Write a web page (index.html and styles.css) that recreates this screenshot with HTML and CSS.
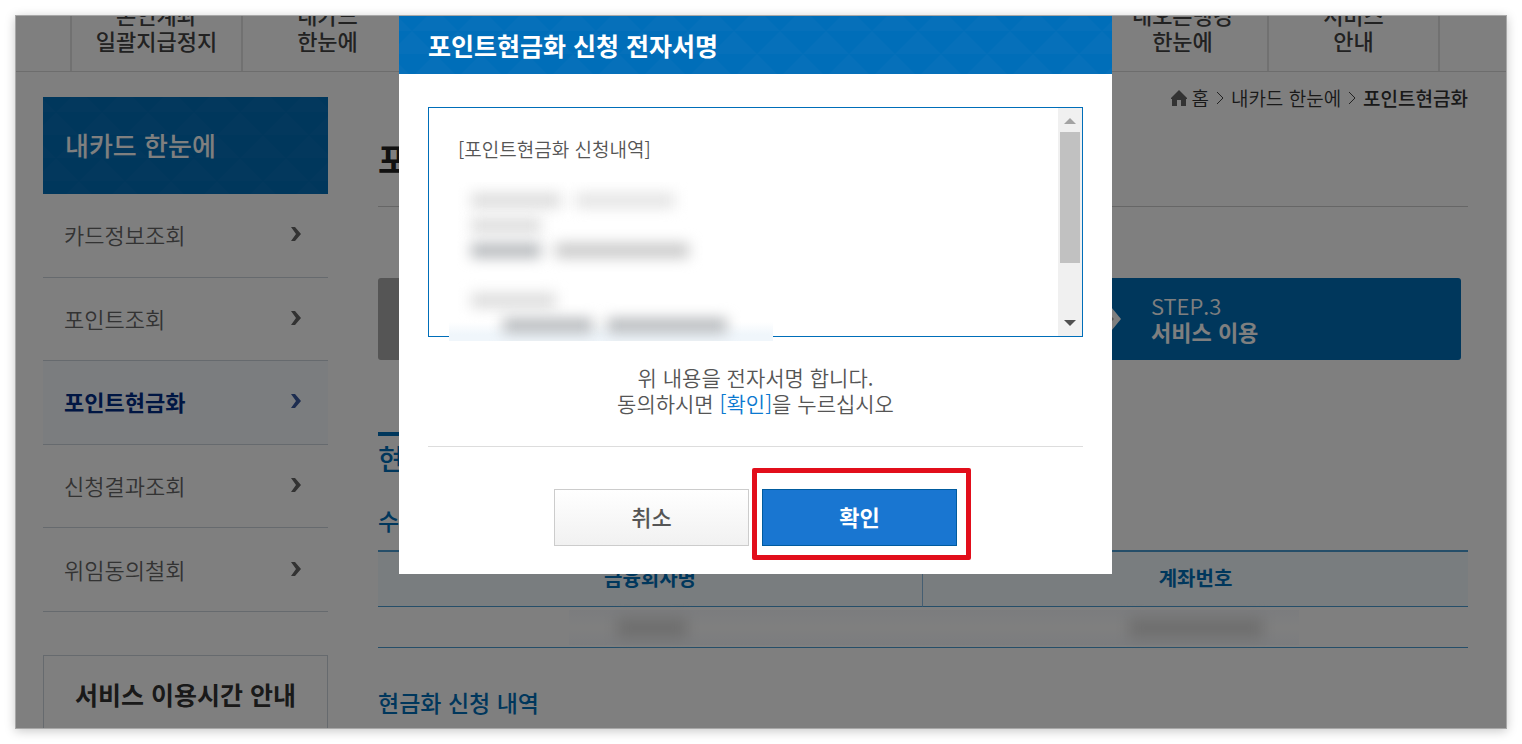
FILE: index.html
```html
<!DOCTYPE html>
<html lang="ko">
<head>
<meta charset="utf-8">
<title>포인트현금화</title>
<link rel="stylesheet" href="styles.css">
</head>
<body>
<div class="frame">
  <div class="page">
    <nav class="gnb">
      <span class="gnb-item"></span>
      <a class="gnb-item" href="#">본인계좌<br>일괄지급정지</a>
      <a class="gnb-item" href="#">내카드<br>한눈에</a>
      <span class="gnb-item"></span>
      <span class="gnb-item"></span>
      <span class="gnb-item"></span>
      <span class="gnb-item"></span>
      <a class="gnb-item" href="#">내오픈뱅킹<br>한눈에</a>
      <a class="gnb-item" href="#">서비스<br>안내</a>
      <span class="gnb-item"></span>
    </nav>
    <div class="body">
      <aside class="side">
        <h2 class="side-title pattern">내카드 한눈에</h2>
        <ul class="side-menu">
          <li><a href="#">카드정보조회<svg class="chev" viewBox="0 0 12 14"><path d="M1 0H5L11 7L5 14H1L6 7Z"/></svg></a></li>
          <li><a href="#">포인트조회<svg class="chev" viewBox="0 0 12 14"><path d="M1 0H5L11 7L5 14H1L6 7Z"/></svg></a></li>
          <li class="active"><a href="#">포인트현금화<svg class="chev" viewBox="0 0 12 14"><path d="M1 0H5L11 7L5 14H1L6 7Z"/></svg></a></li>
          <li><a href="#">신청결과조회<svg class="chev" viewBox="0 0 12 14"><path d="M1 0H5L11 7L5 14H1L6 7Z"/></svg></a></li>
          <li><a href="#">위임동의철회<svg class="chev" viewBox="0 0 12 14"><path d="M1 0H5L11 7L5 14H1L6 7Z"/></svg></a></li>
        </ul>
        <section class="hours"><h3>서비스 이용시간 안내</h3></section>
      </aside>
      <main class="main">
        <div class="crumbs">
          <svg class="home" viewBox="0 0 16 16"><path d="M8 0L16 8V9H15V16H10V10H6V16H1V9H0V8Z"/></svg>
          <a href="#">홈</a>
          <svg class="sep" viewBox="0 0 8 14"><path d="M1 1L7 7L1 13"/></svg>
          <a href="#">내카드 한눈에</a>
          <svg class="sep" viewBox="0 0 8 14"><path d="M1 1L7 7L1 13"/></svg>
          <strong>포인트현금화</strong>
        </div>
        <h1 class="title">포인트현금화</h1>
        <div class="steps">
          <div class="step"></div>
          <div class="step"></div>
          <div class="step current">
            <svg class="arrow" viewBox="0 0 22 34"><path class="arrow-out" d="M0 0H7L21 17L7 34H0Z"/><path class="arrow-in" d="M0 3L14 17L0 31Z"/></svg>
            <span>STEP.3</span><strong>서비스 이용</strong>
          </div>
        </div>
        <h2 class="section">현금화 신청</h2>
        <h3 class="sub">수취 계좌</h3>
        <table class="grid">
          <thead><tr><th scope="col">금융회사명</th><th scope="col">계좌번호</th></tr></thead>
          <tbody><tr>
            <td><div class="mask mask-left"><i class="smudge smudge-bank"></i></div></td>
            <td><div class="mask mask-right"><i class="smudge smudge-account"></i></div></td>
          </tr></tbody>
        </table>
        <h3 class="sub sub-next">현금화 신청 내역</h3>
      </main>
    </div>
  </div>
  <div class="dim"></div>
  <div class="modal" role="dialog" aria-labelledby="dialog-title">
    <h2 class="modal-title pattern" id="dialog-title">포인트현금화 신청 전자서명</h2>
    <div class="modal-body">
      <div class="doc">
        <div class="doc-text">
          <p>[포인트현금화 신청내역]</p>
          <div class="veil">
            <div class="line"><i class="smudge w90 pale"></i><i class="smudge w100 faint"></i></div>
            <div class="line"><i class="smudge w70 pale"></i></div>
            <div class="line"><i class="smudge w70 dark"></i><i class="smudge w140 mid"></i></div>
            <div class="line"></div>
            <div class="line"><i class="smudge w85 pale"></i></div>
            <div class="line indent"><i class="smudge w90 dark"></i><i class="smudge w120 dark"></i></div>
          </div>
        </div>
        <div class="scroll">
          <svg class="tri" viewBox="0 0 12 6"><path fill="#a3a3a3" d="M0 6L6 0L12 6Z"/></svg>
          <div class="thumb"></div>
          <svg class="tri" viewBox="0 0 12 6"><path fill="#505050" d="M0 0H12L6 6Z"/></svg>
        </div>
      </div>
      <p class="notice">위 내용을 전자서명 합니다.<br>동의하시면 <em>[확인]</em>을 누르십시오</p>
      <div class="actions">
        <button class="btn" type="button">취소</button>
        <div class="marked"><button class="btn primary" type="button">확인</button></div>
      </div>
    </div>
  </div>
</div>
</body>
</html>
```
FILE: styles.css
```css
* { box-sizing: border-box; }
body {
  margin: 0;
  padding: 15px;
  background: #fff;
  color: #555;
  font-family: "Noto Sans CJK KR", sans-serif;
  font-size: 22px;
  line-height: 26px;
}
h1, h2, h3, p, ul { margin: 0; padding: 0; }
a { color: inherit; text-decoration: none; }
svg { display: block; flex: none; }
i { display: block; }

.frame {
  position: relative;
  height: calc(100vh - 30px);
  overflow: hidden;
  border: 1px solid #a8a8a8;
  box-shadow: 0 2px 10px rgba(0, 0, 0, .22);
}
.page { height: 100%; overflow: hidden; }
.dim { position: absolute; inset: 0; background: rgba(0, 0, 0, .5); }
.pattern {
  background: #006eb9 url("data:image/svg+xml,%3Csvg xmlns='http://www.w3.org/2000/svg' width='46' height='46'%3E%3Cpath fill='%230670ba' d='M23 0L46 23H0ZM0 23L23 46H-23ZM46 23L69 46H23Z'/%3E%3C/svg%3E") -10px 15px;
}

.gnb {
  display: grid;
  grid-template-columns: 56fr repeat(8, 171fr) 66fr;
  height: 56px;
  border-bottom: 1px solid #dadada;
}
.gnb-item {
  display: flex;
  align-items: flex-end;
  justify-content: center;
  height: 55px;
  padding-bottom: 18px;
  border-right: 2px solid #e2e2e2;
  overflow: hidden;
  color: #444;
  font-weight: 500;
  text-align: center;
}
.gnb-item:last-child { border-right: 0; }

.body { display: flex; gap: 50px; padding: 25px 38px 0 27px; }
.side { flex: none; width: 285px; }
.side-title {
  padding: 34px 22px 35px;
  color: #fff;
  font-size: 26px;
  font-weight: 500;
  line-height: 28px;
}
.side-menu { display: grid; grid-auto-rows: 1fr; height: 418px; list-style: none; }
.side-menu li { border-bottom: 1px solid #cdd5dc; }
.side-menu a {
  display: flex;
  align-items: center;
  justify-content: space-between;
  height: 100%;
  padding: 0 26px 2px 21px;
  color: #666;
  font-weight: 350;
}
.side-menu .active { background: #f6faff; }
.side-menu .active a { color: #002c86; font-weight: 700; }
.chev { width: 12px; height: 14px; fill: #666; }
.active .chev { fill: #3a5aa0; }
.hours { margin-top: 43px; padding: 25px 0; border: 1px solid #ccd5dd; text-align: center; }
.hours h3 { color: #333; font-size: 25px; font-weight: 700; }

.main { flex: 1; min-width: 0; }
.crumbs {
  display: flex;
  align-items: center;
  justify-content: flex-end;
  gap: 7px;
  height: 2px;
  color: #333;
  font-size: 19px;
  font-weight: 350;
}
.crumbs strong { font-weight: 500; }
.home { width: 16px; height: 16px; margin-right: -3px; fill: #666; }
.sep { width: 8px; height: 14px; fill: none; stroke: #444; }
.title {
  height: 108px;
  padding-top: 40px;
  border-bottom: 1px solid #ccc;
  color: #222;
  font-size: 34px;
  font-weight: 700;
  line-height: 40px;
}
.steps {
  display: grid;
  grid-template-columns: repeat(3, 1fr);
  margin: 71px 7px 0 0;
  border-radius: 3px;
  overflow: hidden;
}
.step { height: 82px; background: #aaa; }
.step.current {
  position: relative;
  display: flex;
  flex-direction: column;
  justify-content: center;
  padding: 0 0 3px 51px;
  background: #006eb9;
  color: #fff;
  font-weight: 350;
}
.step strong { font-weight: 700; }
.arrow { position: absolute; left: 0; top: 24px; width: 22px; height: 34px; }
.arrow-out { fill: #fff; }
.arrow-in { fill: #aaa; }
.section {
  width: fit-content;
  margin-top: 72px;
  padding: 5px 0 2px;
  border-top: 4px solid #006eb9;
  color: #006eb9;
  font-size: 28px;
  font-weight: 500;
  line-height: 34px;
}
.sub { margin-top: 30px; color: #006eb9; font-size: 23px; font-weight: 500; }
.sub-next { margin-top: 41px; }
.grid {
  width: 100%;
  margin-top: 17px;
  border-collapse: separate;
  border-spacing: 0;
  table-layout: fixed;
  border-top: 2px solid #4b9dd3;
}
.grid th {
  height: 55px;
  padding: 0 0 2px;
  background: #f2fafe;
  border-bottom: 1px solid #4b9dd3;
  color: #006eb9;
  font-size: 20px;
  font-weight: 700;
}
.grid td { height: 41px; padding: 3px 0 2px; border-bottom: 1px solid #4b9dd3; }
.grid th:first-child { border-right: 1px solid #8abce4; }
.mask {
  display: flex;
  align-items: center;
  height: 35px;
  background: linear-gradient(#f7f9fd, #fff 50%, #f7f9fd);
}
.mask-left { margin-left: 35%; padding-left: 48px; }
.mask-right { margin-right: 31%; justify-content: flex-end; padding-right: 36px; }
.smudge { height: 15px; filter: blur(7px); background: #bbb; }
.smudge-bank { width: 70px; height: 20px; background: #ddd; }
.smudge-account { width: 134px; height: 20px; background: #ddd; }

.modal {
  position: absolute;
  left: 383px;
  top: 0;
  width: 713px;
  background: #fff;
}
.modal-title {
  padding: 15px 29px;
  color: #fff;
  font-size: 25px;
  font-weight: 700;
  line-height: 28px;
}
.modal-body { padding: 33px 29px 28px; }
.doc { display: flex; height: 230px; border: 1px solid #006eb9; }
.doc-text {
  flex: 1;
  padding: 28px 0 0 20px;
  font-size: 19px;
  font-weight: 350;
}
.doc-text p { padding-left: 9px; }
.veil {
  width: 324px;
  margin-top: 20px;
  padding: 6px 0 0 22px;
  height: 159px;
  overflow: hidden;
  background: linear-gradient(#fff 88%, #f0f6fb 96%);
}
.line { display: flex; align-items: center; gap: 14px; height: 25px; }
.line.indent { padding-left: 32px; }
.w70 { width: 70px; }
.w85 { width: 85px; }
.w90 { width: 90px; }
.w100 { width: 100px; }
.w120 { width: 120px; }
.w140 { width: 134px; }
.faint { background: #e4e4e4; }
.pale { background: #dcdcdc; }
.mid { background: #c9c9c9; }
.dark { background: #b6b9bc; }
.scroll {
  display: flex;
  flex-direction: column;
  align-items: center;
  width: 24px;
  padding: 10px 0;
  background: #f0f0f0;
}
.tri { width: 12px; height: 6px; }
.thumb { width: 20px; height: 131px; margin: 8px 0 auto; background: #c1c1c1; }
.notice {
  padding: 27px 0 30px;
  border-bottom: 1px solid #ddd;
  font-size: 21px;
  font-weight: 350;
  text-align: center;
}
.notice em { color: #0b79d0; font-style: normal; }
.actions { display: flex; justify-content: center; gap: 13px; padding-top: 42px; }
.btn {
  display: block;
  width: 195px;
  height: 57px;
  padding: 0 0 3px;
  border: 1px solid #ccc;
  background: linear-gradient(#fff, #f1f1f1);
  color: #555;
  font: 500 22px/26px "Noto Sans CJK KR", sans-serif;
}
.btn.primary { border-color: #005b9f; background: #1976d1; color: #fff; font-weight: 700; }
.marked { position: relative; }
.marked::after {
  content: "";
  position: absolute;
  inset: -21px -14px -14px -10px;
  border: 5px solid #e20e1b;
  border-radius: 2px;
  pointer-events: none;
}
```
